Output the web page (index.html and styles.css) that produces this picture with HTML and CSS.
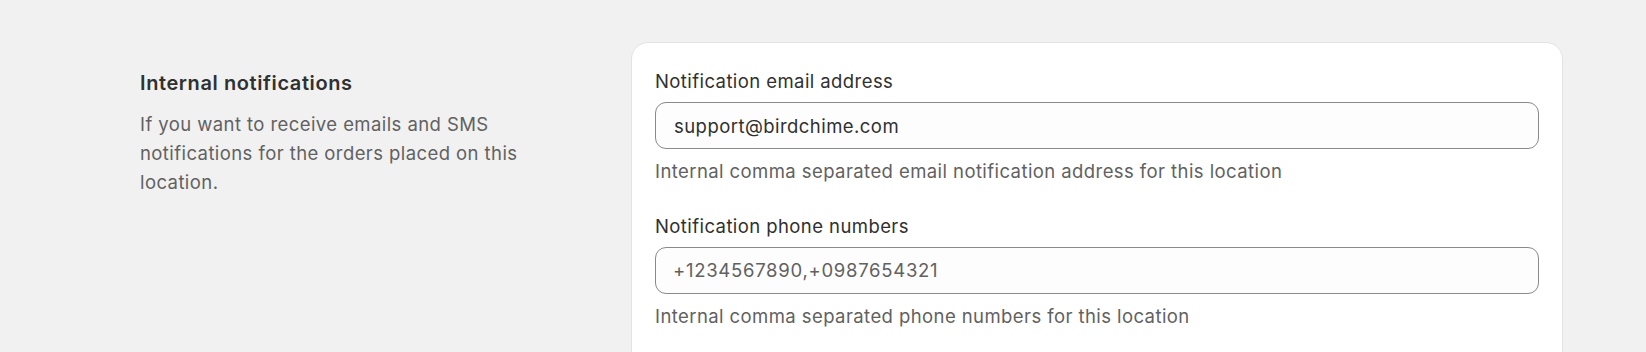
FILE: index.html
```html
<!DOCTYPE html>
<html lang="en">
<head>
<meta charset="utf-8">
<title>Internal notifications</title>
<link rel="stylesheet" href="styles.css">
</head>
<body>
<div class="section">
  <div class="annotation">
    <h2 class="heading">Internal notifications</h2>
    <p class="desc">If you want to receive emails and SMS notifications for the orders placed on this location.</p>
  </div>
  <div class="card">
    <div class="field">
      <label class="label" for="email">Notification email address</label>
      <input class="input" id="email" type="text" value="support@birdchime.com">
      <div class="help">Internal comma separated email notification address for this location</div>
    </div>
    <div class="field">
      <label class="label" for="phone">Notification phone numbers</label>
      <input class="input input-phone" id="phone" type="text" placeholder="+1234567890,+0987654321">
      <div class="help">Internal comma separated phone numbers for this location</div>
    </div>
  </div>
</div>
</body>
</html>
```

FILE: styles.css
```css
html, body {
  margin: 0;
  padding: 0;
  background: #f1f1f1;
}

body {
  font-family: Inter, "Noto Sans", "Liberation Sans", sans-serif;
  color: #303030;
  font-size: 18.5px;
  line-height: 28.5px;
  letter-spacing: 0.42px;
  -webkit-font-smoothing: antialiased;
}

.section {
  display: grid;
  grid-template-columns: 491px 932px;
  padding: 42px 0 0 140px;
}

.annotation {
  padding: 27px 66px 0 0;
}

.heading {
  margin: 0;
  font-size: 20px;
  line-height: 28px;
  font-weight: 600;
  letter-spacing: 0.6px;
  color: #303030;
}

.desc {
  margin: 13px 0 0;
  line-height: 29px;
  color: #616161;
}

.card {
  background: #ffffff;
  border: 1px solid #e3e3e3;
  border-radius: 17px;
  padding: 24px 23px 48px;
  display: flex;
  flex-direction: column;
  gap: 26px;
}

.field {
  display: flex;
  flex-direction: column;
}

.label {
  line-height: 28px;
  color: #303030;
}

.input {
  box-sizing: border-box;
  margin-top: 7px;
  height: 47px;
  width: 100%;
  padding: 0 18px;
  border: 1px solid #8a8a8a;
  border-radius: 11px;
  background: #fdfdfd;
  font: inherit;
  letter-spacing: 0.45px;
  color: #303030;
  outline: none;
}

.input-phone {
  letter-spacing: 0.72px;
  padding-left: 17px;
}

.input::placeholder {
  color: #616161;
  opacity: 1;
}

.help {
  margin-top: 8px;
  color: #616161;
}
```
